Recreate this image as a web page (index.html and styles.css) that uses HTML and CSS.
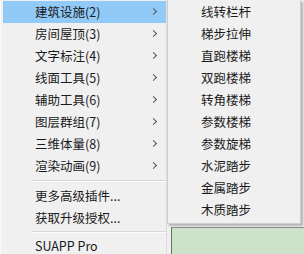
FILE: index.html
```html
<!DOCTYPE html>
<html>
<head>
    <title>SUAPP Menu</title>
    <link rel="stylesheet" href="styles.css">
</head>
<body>
    <div class="screen">
        <ul class="menu">
            <li class="item active">建筑设施(2)<span class="arrow"></span></li>
            <li class="item">房间屋顶(3)<span class="arrow"></span></li>
            <li class="item">文字标注(4)<span class="arrow"></span></li>
            <li class="item">线面工具(5)<span class="arrow"></span></li>
            <li class="item">辅助工具(6)<span class="arrow"></span></li>
            <li class="item">图层群组(7)<span class="arrow"></span></li>
            <li class="item">三维体量(8)<span class="arrow"></span></li>
            <li class="item">渲染动画(9)<span class="arrow"></span></li>
            <li class="sep"></li>
            <li class="item">更多高级插件...</li>
            <li class="item">获取升级授权...</li>
            <li class="sep short"></li>
            <li class="item">SUAPP Pro</li>
        </ul>
        <div class="side">
            <ul class="submenu">
                <li>线转栏杆</li>
                <li>梯步拉伸</li>
                <li>直跑楼梯</li>
                <li>双跑楼梯</li>
                <li>转角楼梯</li>
                <li>参数楼梯</li>
                <li>参数旋梯</li>
                <li>水泥踏步</li>
                <li>金属踏步</li>
                <li>木质踏步</li>
            </ul>
            <div class="canvas"></div>
        </div>
    </div>
</body>
</html>
```

FILE: styles.css
```css
body {
    margin: 0;
    background: #f0f0f0;
    font-family: "Noto Sans CJK SC", "Liberation Sans", sans-serif;
    font-size: 12.5px;
    color: #1a1a1a;
}
ul {
    list-style: none;
    margin: 0;
    padding: 0;
}
.screen {
    display: flex;
    width: 304px;
    height: 254px;
    overflow: hidden;
}
.menu {
    width: 163px;
    padding: 1px 0 0 2px;
    background: #f0f0f0;
    border-left: 1px solid #fafafa;
    border-right: 1px solid #dcdcdc;
}
.item {
    position: relative;
    height: 22px;
    line-height: 22px;
    padding-left: 32px;
    white-space: nowrap;
}
.item.active {
    background: #91c9f7;
}
.arrow {
    position: absolute;
    right: 10px;
    top: 8px;
    width: 4px;
    height: 4px;
    border-top: 1px solid #555;
    border-right: 1px solid #555;
    transform: rotate(45deg);
}
.sep {
    height: 8px;
    margin-left: 29px;
    background: linear-gradient(#f0f0f0 3px, #d7d7d7 3px, #d7d7d7 4px, #fdfdfd 4px, #fdfdfd 5px, #f0f0f0 5px);
}
.sep.short {
    height: 6px;
    background: linear-gradient(#f0f0f0 2px, #d7d7d7 2px, #d7d7d7 3px, #fdfdfd 3px, #fdfdfd 4px, #f0f0f0 4px);
}
.side {
    display: flex;
    flex-direction: column;
    flex: 1;
}
.submenu {
    width: 132px;
    padding: 1px 0 2px;
    background: #f0f0f0;
    border: 1px solid #cfcfcf;
    border-top: none;
    box-shadow: 2px 2px 2px rgba(0, 0, 0, 0.25);
}
.submenu li {
    height: 22px;
    line-height: 22px;
    padding-left: 33px;
}
.canvas {
    flex: 1;
    margin: 3px 0 0 4px;
    background: #cde3c9;
    border-left: 1px solid #6e6e6e;
    border-top: 1px solid #8a8a8a;
}
```
